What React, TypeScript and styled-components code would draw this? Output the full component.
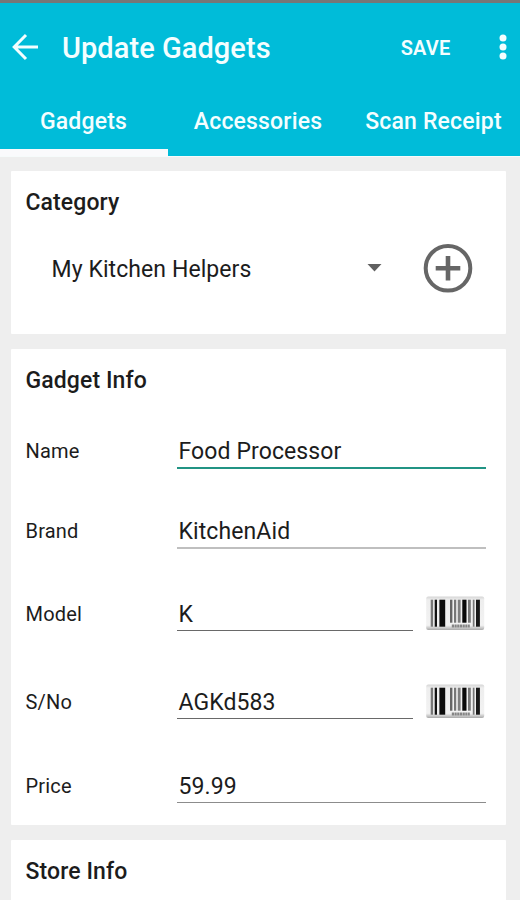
import React from 'react';
import styled, { createGlobalStyle } from 'styled-components';

const GlobalStyle = createGlobalStyle`
  * { box-sizing: border-box; }
  html, body { margin: 0; padding: 0; background: #eeeeee; }
  body { font-family: Roboto, "Liberation Sans", sans-serif; color: #1c1c1c; }
  button { font: inherit; color: inherit; background: none; border: 0; padding: 0; margin: 0; }
  svg { display: block; flex: none; }
`;

const Screen = styled.main`
  width: 520px;
  height: 900px;
  overflow: hidden;
  background: #eeeeee;
`;

const Header = styled.header`
  height: 157px;
  background: #00bcd9;
  border-top: 3px solid #777777;
  border-bottom: 1px solid #f6fbfb;
  color: #f4feff;
`;

const Toolbar = styled.div`
  height: 88px;
  display: flex;
  align-items: center;
  padding: 0 13px 0 12px;
`;

const Title = styled.h1`
  margin: 2px 0 0 23px;
  flex: 1;
  font-size: 29px;
  font-weight: 500;
  line-height: 34px;
  letter-spacing: 0.05px;
  white-space: nowrap;
`;

const SaveButton = styled.button`
  font-size: 20px;
  font-weight: 600;
  line-height: 24px;
  letter-spacing: 0.2px;
  margin: 1px 48.5px 0 0;
`;

const Tabs = styled.nav`
  height: 65px;
  display: grid;
  grid-template-columns: 167px 182px 169px;
`;

const Tab = styled.button<{ $active?: boolean }>`
  font-size: 23px;
  font-weight: 500;
  line-height: 28px;
  letter-spacing: 0.18px;
  padding: ${p => (p.$active ? '3px 1px 0 0' : '0 0 4px')};
  border-bottom: ${p => (p.$active ? '7px solid #fafafc' : '0')};
  margin-right: ${p => (p.$active ? '-1px' : '0')};
  white-space: nowrap;
`;

const Content = styled.div`
  display: flex;
  flex-direction: column;
  gap: 15px;
  padding: 14px 14px 0 11px;
`;

const Card = styled.section<{ $height: number }>`
  height: ${p => p.$height}px;
  padding: 18px 20px 0 14.5px;
  background: #ffffff;
  border-radius: 1px;
`;

const CardTitle = styled.h2`
  margin: 0;
  font-size: 23px;
  font-weight: 500;
  line-height: 28px;
  letter-spacing: 0.1px;
`;

const CategoryRow = styled.div`
  display: flex;
  align-items: center;
  height: 50px;
  margin-top: 26px;
  padding: 0 13px 0 26px;
`;

const Selection = styled.span`
  flex: 1;
  font-size: 23px;
  line-height: 28px;
  padding-top: 3px;
  letter-spacing: 0.08px;
`;

const Caret = styled.svg`
  margin-right: 41px;
`;

const FieldRow = styled.div<{ $height: number }>`
  height: ${p => p.$height}px;
  display: grid;
  grid-template-columns: 151.5px 1fr auto;
  align-items: end;
`;

const Label = styled.label`
  font-size: 20px;
  line-height: 24px;
  padding-bottom: 6px;
  letter-spacing: 0.2px;
`;

const Value = styled.div<{ $line: string; $thin: boolean }>`
  height: ${p => (p.$thin ? 35 : 36)}px;
  margin-bottom: ${p => (p.$thin ? 1 : 0)}px;
  padding: 5px 0 0 1.5px;
  font-size: 23px;
  line-height: 28px;
  letter-spacing: 0.1px;
  border-bottom: ${p => (p.$thin ? 1 : 2)}px solid ${p => p.$line};
  white-space: nowrap;
`;

const BarcodeButton = styled.button`
  margin-left: 13px;
`;

const BackIcon = () => (
  <svg width="27" height="28" viewBox="0 0 27 28" fill="none" stroke="currentColor" strokeWidth="3">
    <path d="M26 14H3M14 2L2.2 14L14 26" />
  </svg>
);

const MoreIcon = () => (
  <svg width="8" height="28" viewBox="0 0 8 28" fill="currentColor">
    <circle cx="4" cy="5" r="3.5" />
    <circle cx="4" cy="14" r="3.5" />
    <circle cx="4" cy="23" r="3.5" />
  </svg>
);

const AddIcon = () => (
  <svg width="50" height="50" viewBox="0 0 50 50" fill="none" stroke="#666666">
    <circle cx="25" cy="25.3" r="22.3" strokeWidth="4" />
    <path d="M25 13V37.6M12.7 25.3H37.3" strokeWidth="4.6" />
  </svg>
);

const bars: [number, number, number, string][] = [
  [4.7, 2.4, 27, '#777'], [8.7, 2.3, 27, '#111'], [13.4, 5.8, 27, '#0c0c0c'],
  [24, 2.4, 23, '#666'], [28, 2.2, 23, '#777'], [31.8, 2.8, 23, '#808080'], [36.3, 4.2, 23, '#090909'],
  [42, 2.8, 23, '#777'], [46.8, 1.7, 27, '#777'], [50, 3.9, 27, '#181818'],
];

const BarcodeIcon = () => (
  <svg width="60" height="37" viewBox="0 0 60 37">
    <defs>
      <linearGradient id="plate" x1="0" y1="0" x2="0" y2="1">
        <stop offset="0" stopColor="#d5d5d5" />
        <stop offset="0.1" stopColor="#eeeeee" />
        <stop offset="0.86" stopColor="#f2f2f2" />
        <stop offset="1" stopColor="#a9a9a9" />
      </linearGradient>
    </defs>
    <rect x="0.2" y="1.5" width="58" height="33.5" rx="2" fill="url(#plate)" />
    {bars.map(([x, w, h, fill]) => (
      <rect key={x} x={x} y="4.7" width={w} height={h} fill={fill} />
    ))}
    <path d="M25.8 31H43.8" stroke="#858585" strokeWidth="3.2" strokeDasharray="2.2 .5" />
  </svg>
);

type Field = {
  label: string;
  value: string;
  height: number;
  line: string;
  thin?: boolean;
  scan?: boolean;
};

const fields: Field[] = [
  { label: 'Name', value: 'Food Processor', height: 74, line: '#219484' },
  { label: 'Brand', value: 'KitchenAid', height: 80, line: '#bfbfbf' },
  { label: 'Model', value: 'K', height: 83, line: '#696969', thin: true, scan: true },
  { label: 'S/No', value: 'AGKd583', height: 88, line: '#696969', thin: true, scan: true },
  { label: 'Price', value: '59.99', height: 84, line: '#8c8c8c', thin: true },
];

export default function App() {
  return (
    <Screen>
      <GlobalStyle />
      <Header>
        <Toolbar>
          <button aria-label="Back"><BackIcon /></button>
          <Title>Update Gadgets</Title>
          <SaveButton>SAVE</SaveButton>
          <button aria-label="More options"><MoreIcon /></button>
        </Toolbar>
        <Tabs>
          <Tab $active>Gadgets</Tab>
          <Tab>Accessories</Tab>
          <Tab>Scan Receipt</Tab>
        </Tabs>
      </Header>
      <Content>
        <Card $height={163}>
          <CardTitle>Category</CardTitle>
          <CategoryRow>
            <Selection>My Kitchen Helpers</Selection>
            <Caret width="15" height="8" viewBox="0 0 15 8">
              <path d="M0.5 0H14.5L7.5 7.5Z" fill="#606060" />
            </Caret>
            <button aria-label="Add category"><AddIcon /></button>
          </CategoryRow>
        </Card>
        <Card $height={476}>
          <CardTitle>Gadget Info</CardTitle>
          {fields.map(f => (
            <FieldRow key={f.label} $height={f.height}>
              <Label>{f.label}</Label>
              <Value $line={f.line} $thin={!!f.thin}>{f.value}</Value>
              {f.scan && <BarcodeButton aria-label={`Scan ${f.label}`}><BarcodeIcon /></BarcodeButton>}
            </FieldRow>
          ))}
        </Card>
        <Card $height={163}>
          <CardTitle>Store Info</CardTitle>
        </Card>
      </Content>
    </Screen>
  );
}
